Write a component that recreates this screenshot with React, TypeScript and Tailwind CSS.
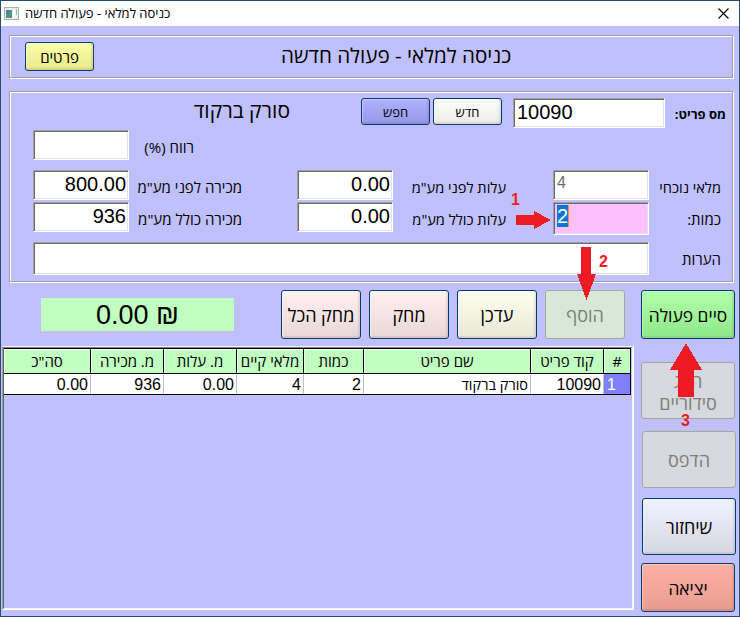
import type { ReactNode } from "react";

const HE = "font-['Open_Sans','Liberation_Sans',sans-serif]";

function Panel({ className, children }: { className: string; children: ReactNode }) {
  return (
    <section className={`ml-2 w-[724px] shrink-0 border border-[#a0a0a0] shadow-[1px_1px_0_#fff,inset_1px_1px_0_#fff] ${className}`}>
      {children}
    </section>
  );
}

function Field({ className, children }: { className: string; children?: ReactNode }) {
  return (
    <div
      className={`shrink-0 border border-t-[#a0a0a0] border-l-[#a0a0a0] border-r-white border-b-white pr-[2px] pl-[3px] shadow-[inset_1px_1px_0_#696969,inset_-1px_-1px_0_#e3e3e3] ${className}`}
    >
      {children}
    </div>
  );
}

function Button({ className, children, disabled }: { className: string; children: ReactNode; disabled?: boolean }) {
  return (
    <button
      dir="rtl"
      disabled={disabled}
      className={`flex shrink-0 items-center justify-center rounded-[3px] border pt-[2px] text-center whitespace-nowrap ${HE} ${
        disabled
          ? "border-[#a0ab96] text-[#7c8272]"
          : "border-[#003c74] text-black shadow-[inset_-2px_-2px_1px_rgba(90,80,70,0.13),inset_1px_1px_1px_rgba(255,255,255,0.35)]"
      } ${className}`}
    >
      {children}
    </button>
  );
}

function Label({ className, children }: { className: string; children: ReactNode }) {
  return (
    <span dir="rtl" className={`shrink-0 text-right whitespace-nowrap ${HE} ${className}`}>
      {children}
    </span>
  );
}

const columns = [
  { title: 'סה"כ', value: "0.00", width: "w-[87px]" },
  { title: "מ. מכירה", value: "936", width: "w-[73px]" },
  { title: "מ. עלות", value: "0.00", width: "w-[73px]" },
  { title: "מלאי קיים", value: "4", width: "w-[67px]" },
  { title: "כמות", value: "2", width: "w-[60px]" },
  { title: "שם פריט", value: "סורק ברקוד", width: "w-[167px]" },
  { title: "קוד פריט", value: "10090", width: "w-[73px]" },
  { title: "#", value: "1", width: "w-[27px]" },
];

function ItemsTable() {
  return (
    <div className="h-[264px] w-[632px] shrink-0 border border-t-[#f0f0ff] border-l-[#a0a0a0] border-r-white border-b-white">
      <div className="h-full border border-t-[#808080] border-l-[#606060] border-r-[#f3f3f3] border-b-[#f3f3f3]">
        <div className="flex h-[26px] w-[627px] border-t border-b border-black">
          {columns.map((c) => (
            <div
              key={c.title}
              dir="rtl"
              className={`flex shrink-0 items-center justify-center border-r border-black bg-[#c0ffc0] pt-px text-[15px] whitespace-nowrap shadow-[inset_1px_1px_0_#f4fff4] ${HE} ${c.width}`}
            >
              {c.title}
            </div>
          ))}
        </div>
        <div className="flex h-[21px] w-[627px] border-b border-black bg-white">
          {columns.map((c) => (
            <div
              key={c.title}
              className={`shrink-0 border-r leading-[22px] whitespace-nowrap ${c.width} ${
                c.title === "#" ? "border-black bg-[#8080ff] pl-[3px] text-left text-white" : "border-[#c0c0c0] pr-[2px] text-right"
              } ${c.title === "שם פריט" ? `text-[14.5px] ${HE}` : "text-[16px]"}`}
            >
              {c.value}
            </div>
          ))}
        </div>
      </div>
    </div>
  );
}

function Annotations() {
  return (
    <div className="pointer-events-none absolute inset-0 text-[16px] leading-[16px] font-bold text-[#ed1c24]">
      <svg className="absolute inset-0" width="740" height="617" fill="#ed1c24" shapeRendering="crispEdges">
        <path d="M516 215H534V211L551 220L534 229V225H516Z" />
        <path d="M581 247H591V274H596L586.5 300L577 274H581Z" />
        <path d="M686 343L702 370H694V397H678V370H670Z" />
      </svg>
      <span className="absolute top-[192px] left-[511px]">1</span>
      <span className="absolute top-[254px] left-[599px]">2</span>
      <span className="absolute top-[413px] left-[681px]">3</span>
    </div>
  );
}

export default function App() {
  return (
    <div className="relative h-[617px] w-[740px] overflow-hidden bg-[#24506c] p-px font-['Liberation_Sans',Arial,sans-serif] text-black">
      <div className="flex h-[615px] w-[738px] flex-col bg-[#c0c0ff]">
        <header className="flex h-[25px] shrink-0 items-center bg-white pr-[10px] pl-[3px]">
          <svg width="15" height="13" viewBox="0 0 15 13">
            <rect x="0.5" y="0.5" width="14" height="12" fill="#eef0f0" stroke="#a9b0b4" />
            <rect x="2" y="3" width="6" height="8" fill="#4f9583" />
            <rect x="2" y="3" width="3" height="4" fill="#4c7fa8" />
            <rect x="9" y="3" width="2" height="8" fill="#fff" />
            <rect x="12" y="2" width="1" height="6" fill="#8bbf9d" />
          </svg>
          <Label className="ml-[6px] text-[13px]">כניסה למלאי - פעולה חדשה</Label>
          <svg className="ml-auto" width="11" height="11" viewBox="0 0 11 11" stroke="#000" strokeWidth="1.1">
            <path d="M0.5 0.5L10.5 10.5M10.5 0.5L0.5 10.5" />
          </svg>
        </header>

        <Panel className="mt-[9px] flex h-[43px] items-start pl-[15px]">
          <Button className="mt-[6px] h-[29px] w-[69px] bg-linear-to-b from-[#ffffa8] to-[#e8e88c] text-[15px]">פרטים</Button>
          <Label className="mt-[5px] ml-[187px] text-[20.6px] leading-[28px] font-medium">כניסה למלאי - פעולה חדשה</Label>
        </Panel>

        <Panel className="mt-[13px] flex h-[191px] flex-col pl-[23px]">
          <div className="mt-[6px] flex h-[32px] items-start">
            <Label className="ml-[158px] w-[99px] text-[21px] leading-[25px] font-medium">סורק ברקוד</Label>
            <Button className="ml-[71px] h-[27px] w-[69px] bg-linear-to-b from-[#b0b0ff] to-[#9898e8] text-[13px]">חפש</Button>
            <Button className="ml-[3px] h-[27px] w-[69px] bg-linear-to-b from-white to-[#ebebe6] text-[13px]">חדש</Button>
            <Field className="ml-[11px] h-[30px] w-[152px] bg-white text-[20px] leading-[27px]">10090</Field>
            <Label className="ml-[2px] w-[59px] text-[13px] leading-[33px] font-bold">מס פריט:</Label>
          </div>
          <div className="flex h-[40px] items-start">
            <Field className="h-[30px] w-[96px] bg-white" />
            <Label className="w-[65px] text-[15px] leading-[34px]">רווח (%)</Label>
          </div>
          <div className="flex h-[32px] items-start">
            <Field className="h-[30px] w-[96px] bg-white text-right text-[20px] leading-[27px]">800.00</Field>
            <Label className="w-[113px] text-[15px] leading-[35px]">מכירה לפני מע"מ</Label>
            <Field className="ml-[55px] h-[30px] w-[96px] bg-white text-right text-[20px] leading-[27px]">0.00</Field>
            <Label className="w-[113px] text-[14.6px] leading-[35px]">עלות לפני מע"מ</Label>
            <Field className="ml-[47px] h-[30px] w-[96px] bg-white pl-[2px] text-[16px] leading-[24px] text-[#6d6d6d]">4</Field>
            <Label className="w-[72px] text-[14.6px] leading-[35px]">מלאי נוכחי</Label>
          </div>
          <div className="flex h-[40px] items-start">
            <Field className="h-[30px] w-[96px] bg-white text-right text-[20px] leading-[27px]">936</Field>
            <Label className="w-[113px] text-[15px] leading-[35px]">מכירה כולל מע"מ</Label>
            <Field className="ml-[55px] h-[30px] w-[96px] bg-white text-right text-[20px] leading-[27px]">0.00</Field>
            <Label className="w-[113px] text-[14.6px] leading-[35px]">עלות כולל מע"מ</Label>
            <Field className="ml-[47px] h-[33px] w-[96px] bg-[#ffc0ff] pl-[2px] text-[20px]">
              <span className="mt-[2px] block h-[22px] w-[12px] border-r border-[#ff8728] bg-[#0078d7] leading-[23px] text-white">2</span>
            </Field>
            <Label className="w-[72px] text-[15px] leading-[35px]">כמות:</Label>
          </div>
          <div className="flex h-[33px] items-start">
            <Field className="h-[33px] w-[616px] bg-white" />
            <Label className="w-[72px] text-[15px] leading-[35px]">הערות</Label>
          </div>
        </Panel>

        <div className="mt-[8px] flex h-[49px] shrink-0 items-start">
          <div className="mt-[8px] ml-[40px] flex h-[33px] w-[193px] shrink-0 items-center justify-center bg-[#c0ffc0] pt-px text-[27px]">0.00 ₪</div>
          <Button className="ml-[47px] h-[49px] w-[80px] bg-linear-to-b from-[#fff0f0] to-[#e8d8d5] text-[18px] font-medium">מחק הכל</Button>
          <Button className="ml-[8px] h-[49px] w-[80px] bg-linear-to-b from-[#fff0f0] to-[#e8d8d5] text-[18px] font-medium">מחק</Button>
          <Button className="ml-[8px] h-[49px] w-[80px] bg-linear-to-b from-[#fffff0] to-[#e8e8d8] text-[18px] font-medium">עדכן</Button>
          <Button disabled className="ml-[8px] h-[49px] w-[80px] bg-[#d8e8d8] text-[18px]">הוסף</Button>
          <Button className="ml-[16px] h-[49px] w-[94px] bg-linear-to-b from-[#b0ffa8] to-[#90e88c] text-[17.4px] font-medium">סיים פעולה</Button>
        </div>

        <main className="mt-[7px] ml-px flex items-start">
          <ItemsTable />
          <div className="mt-[16px] ml-[7px] flex flex-col">
            <Button disabled className="h-[57px] w-[94px] bg-[#d8d8e0] text-[18px] leading-[22px]">
              <span>
                הצג
                <br />
                סידוריים
              </span>
            </Button>
            <Button disabled className="mt-[12px] ml-px h-[57px] w-[94px] bg-[#d8d8e0] text-[18px]">הדפס</Button>
            <Button className="mt-[10px] ml-px h-[57px] w-[94px] bg-linear-to-b from-[#f0f0ff] to-[#d8d8e4] text-[18px] font-medium">שיחזור</Button>
            <Button className="mt-[8px] h-[49px] w-[94px] bg-linear-to-b from-[#ffb0a4] to-[#e89c90] text-[17.4px] font-medium">יציאה</Button>
          </div>
        </main>
      </div>
      <Annotations />
    </div>
  );
}
